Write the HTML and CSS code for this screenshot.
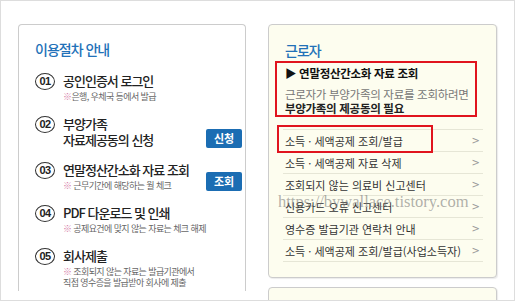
FILE: index.html
```html
<!DOCTYPE html>
<html lang="ko">
<head>
    <meta charset="UTF-8">
    <meta name="viewport" content="width=device-width, initial-scale=1.0">
    <title>연말정산간소화 이용절차</title>
    <link rel="stylesheet" href="styles.css">
</head>
<body>
    <div class="frame">
        <div class="card steps">
            <h2 class="card-title">이용절차 안내</h2>
            <ol class="step-list">
                <li class="step">
                    <span class="num">01</span>
                    <div class="step-body">
                        <p class="step-title">공인인증서 로그인</p>
                        <p class="step-note"><span class="mark">※</span>은행, 우체국 등에서 발급</p>
                    </div>
                </li>
                <li class="step">
                    <span class="num">02</span>
                    <div class="step-body">
                        <p class="step-title">부양가족<br>자료제공동의 신청</p>
                    </div>
                    <a class="btn" href="#">신청</a>
                </li>
                <li class="step">
                    <span class="num">03</span>
                    <div class="step-body">
                        <p class="step-title">연말정산간소화 자료 조회</p>
                        <p class="step-note"><span class="mark">※</span> 근무기간에 해당하는 월 체크</p>
                    </div>
                    <a class="btn" href="#">조회</a>
                </li>
                <li class="step">
                    <span class="num">04</span>
                    <div class="step-body">
                        <p class="step-title">PDF 다운로드 및 인쇄</p>
                        <p class="step-note"><span class="mark">※</span> 공제요건에 맞지 않는 자료는 체크 해제</p>
                    </div>
                </li>
                <li class="step">
                    <span class="num">05</span>
                    <div class="step-body">
                        <p class="step-title">회사제출</p>
                        <p class="step-note"><span class="mark">※</span> 조회되지 않는 자료는 발급기관에서<br>직접 영수증을 발급받아 회사에 제출</p>
                    </div>
                </li>
            </ol>
        </div>

        <div class="side">
            <div class="card worker">
                <h2 class="card-title">근로자</h2>
                <div class="notice">
                    <p class="notice-head">▶ 연말정산간소화 자료 조회</p>
                    <p class="notice-text">근로자가 부양가족의 자료를 조회하려면<br><strong>부양가족의 제공동의 필요</strong></p>
                </div>
                <ul class="links">
                    <li><a href="#">소득 · 세액공제 조회/발급</a><span class="arrow">&gt;</span></li>
                    <li><a href="#">소득 · 세액공제 자료 삭제</a><span class="arrow">&gt;</span></li>
                    <li><a href="#">조회되지 않는 의료비 신고센터</a><span class="arrow">&gt;</span></li>
                    <li><a href="#">신용카드 오류 신고센터</a><span class="arrow">&gt;</span></li>
                    <li><a href="#">영수증 발급기관 연락처 안내</a><span class="arrow">&gt;</span></li>
                    <li><a href="#">소득 · 세액공제 조회/발급(사업소득자)</a><span class="arrow">&gt;</span></li>
                </ul>
                <span class="highlight"></span>
                <span class="watermark">https://bywallace.tistory.com</span>
            </div>
            <div class="card worker next"></div>
        </div>
    </div>
</body>
</html>
```

FILE: styles.css
```css
body {
    margin: 0;
    background: #fff;
    font-family: "Noto Sans CJK KR", "Noto Sans", sans-serif;
    color: #222;
}
p, h2, ol, ul {
    margin: 0;
    padding: 0;
}
a {
    color: inherit;
    text-decoration: none;
}
.frame {
    display: flex;
    align-items: flex-start;
    gap: 22px;
    width: 496px;
    height: 276px;
    padding: 23px 0 0 17px;
    border: 1px solid #ddd;
    overflow: hidden;
}
.card {
    position: relative;
    border: 1px solid #ccc;
    border-radius: 4px;
    box-shadow: 1px 1px 1px rgba(0,0,0,0.08);
}
.card-title {
    font-size: 14px;
    line-height: 20px;
    font-weight: 500;
    letter-spacing: -1px;
    color: #2271b8;
}

/* left: steps */
.steps {
    box-sizing: border-box;
    width: 228px;
    height: 267px;
    padding: 14px 0 0 16px;
    border-bottom: none;
    border-radius: 4px 4px 0 0;
    box-shadow: none;
    overflow: hidden;
}
.step-list {
    list-style: none;
    margin-top: 14px;
    display: flex;
    flex-direction: column;
    gap: 14px;
}
.step {
    display: grid;
    grid-template-columns: 20px 1fr auto;
    column-gap: 8px;
    padding-right: 3px;
}
.num {
    box-sizing: border-box;
    width: 20px;
    height: 17px;
    border: 1.5px solid #333;
    border-radius: 50%;
    font-family: "Liberation Sans", Arial, sans-serif;
    font-size: 11px;
    font-weight: bold;
    line-height: 14px;
    text-align: center;
    letter-spacing: -0.5px;
    color: #222;
}
.step-title {
    font-size: 13px;
    line-height: 16px;
    font-weight: 500;
    letter-spacing: -1px;
    color: #222;
}
.step-note {
    margin-top: 2px;
    font-size: 9px;
    line-height: 11px;
    letter-spacing: -0.6px;
    color: #666;
}
.mark {
    color: #d47aa6;
}
.btn {
    align-self: end;
    width: 36px;
    height: 19px;
    background: #1b6db3;
    border-radius: 2px;
    color: white;
    font-size: 11px;
    font-weight: bold;
    line-height: 19px;
    text-align: center;
}

/* right: worker menu */
.side {
    display: flex;
    flex-direction: column;
    gap: 9px;
    width: 229px;
}
.worker {
    background: #fdfdef;
    padding: 15px 15px 15px 16px;
}
.notice {
    margin: 1px 4px 0 -10px;
    border: 2px solid #e0141e;
    padding: 2px 0 0 8px;
    height: 50px;
}
.notice-head {
    font-size: 11.5px;
    line-height: 16px;
    font-weight: bold;
    letter-spacing: -0.3px;
    color: #111;
}
.notice-text {
    margin-top: 6px;
    font-size: 11.5px;
    line-height: 14px;
    letter-spacing: -0.3px;
    color: #777;
}
.notice-text strong {
    color: #222;
}
.links {
    list-style: none;
    margin: 12px -2px 0;
    border-top: 1px solid #e6e6d6;
}
.links li {
    display: flex;
    justify-content: space-between;
    align-items: center;
    height: 21px;
    padding: 0 3px 0 2px;
    border-bottom: 1px solid #e6e6d6;
    font-size: 11px;
    color: #333;
}
.arrow {
    font-family: "DejaVu Sans", sans-serif;
    font-size: 10px;
    color: #999;
}
.highlight {
    position: absolute;
    left: 8px;
    top: 100px;
    width: 156px;
    height: 28px;
    box-sizing: border-box;
    border: 2px solid #e0141e;
}
.watermark {
    position: absolute;
    left: 9px;
    top: 168px;
    font-family: "Liberation Serif", serif;
    font-size: 16.5px;
    line-height: 18px;
    color: rgba(110,110,110,0.55);
    white-space: nowrap;
}
.next {
    height: 40px;
    padding: 0;
}
```
